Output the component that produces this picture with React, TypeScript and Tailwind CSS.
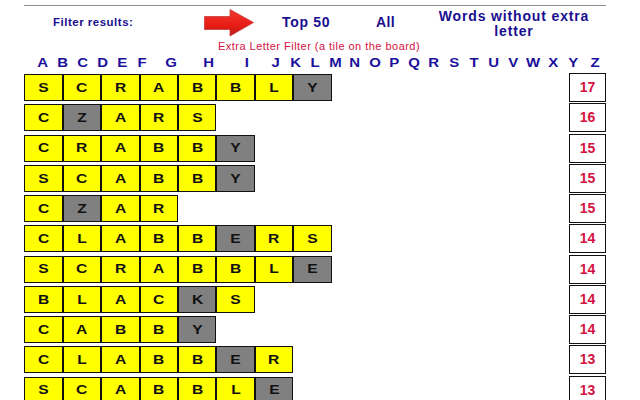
const rows: [string, number[], number][] = [
  ["SCRABBLY", [7], 17],
  ["CZARS", [1], 16],
  ["CRABBY", [5], 15],
  ["SCABBY", [5], 15],
  ["CZAR", [1], 15],
  ["CLABBERS", [5], 14],
  ["SCRABBLE", [7], 14],
  ["BLACKS", [4], 14],
  ["CABBY", [4], 14],
  ["CLABBER", [5], 13],
  ["SCABBLE", [6], 13],
];

function HeadLetter({ c }: { c: string }) {
  const wide = c === "G" || c === "H" || c === "I";
  const cls = wide ? "w-[38px]" : c === "Y" ? "w-[22px]" : "w-[19.8px]";
  return (
    <div className={`${cls} shrink-0 text-center`}>
      <span className="inline-block scale-x-[1.15]">{c}</span>
    </div>
  );
}

export default function App() {
  return (
    <div className="w-[640px] h-[400px] overflow-hidden bg-white font-['Liberation_Sans',Arial,sans-serif] pt-[5px]">
      <div className="mx-[24px] w-[582px] border-t border-[#8f8f8f]" />
      <div className="flex items-center h-[33px] font-bold text-[#1a0f8f]">
        <div className="ml-[53px] w-[151px] text-[11.5px] tracking-[0.5px]">Filter results:</div>
        <svg width="50" height="28" viewBox="0 0 50 28" className="shrink-0">
          <defs>
            <linearGradient id="arrowFill" x1="0" y1="0" x2="0" y2="1">
              <stop offset="0" stopColor="#f03a30" />
              <stop offset="0.6" stopColor="#e81c14" />
              <stop offset="1" stopColor="#b81c1c" />
            </linearGradient>
          </defs>
          <path d="M0.5 7.5H26V0.5L49.5 13.5L26 27V20.5H0.5Z" fill="url(#arrowFill)" stroke="#c93a3a" strokeWidth="0.8" />
        </svg>
        <div className="ml-[28px] w-[94px] text-[14px] tracking-[0.7px]">Top 50</div>
        <div className="w-[41px] text-[14px] tracking-[0.4px]">All</div>
        <div className="w-[194px] text-center text-[14px] leading-[15px] tracking-[0.85px] pt-[2px]">
          Words without extra letter
        </div>
      </div>
      <div className="ml-[218px] h-[14px] leading-[14px] text-[11px] text-[#d3123f] tracking-[0.47px] whitespace-nowrap">
        Extra Letter Filter (a tile on the board)
      </div>
      <div className="flex ml-[33px] mt-[1px] h-[18px] items-center text-[13px] font-bold text-[#1a0f9c]">
        {"ABCDEFGHIJKLMNOPQRSTUVWXYZ".split("").map((c) => (
          <HeadLetter key={c} c={c} />
        ))}
      </div>
      <div className="flex flex-col gap-[3.27px] ml-[24.3px] w-[581.7px] mt-[2px]">
        {rows.map(([word, grey, score], i) => (
          <div key={i} className="flex h-[27px] justify-between">
            <div className="flex">
              {word.split("").map((c, j) => (
                <div
                  key={j}
                  className={`w-[38.45px] h-[27px] border border-[#111] flex items-center justify-center text-[13px] font-bold text-[#111] ${
                    grey.includes(j) ? "bg-[#808080]" : "bg-[#ffff00]"
                  }`}
                >
                  <span className="inline-block scale-x-[1.2]">{c}</span>
                </div>
              ))}
            </div>
            <div className="w-[37px] h-[29px] -mt-[1px] border border-[#111] bg-white flex items-center justify-center text-[14px] font-bold text-[#d3123f]">
              {score}
            </div>
          </div>
        ))}
      </div>
    </div>
  );
}
